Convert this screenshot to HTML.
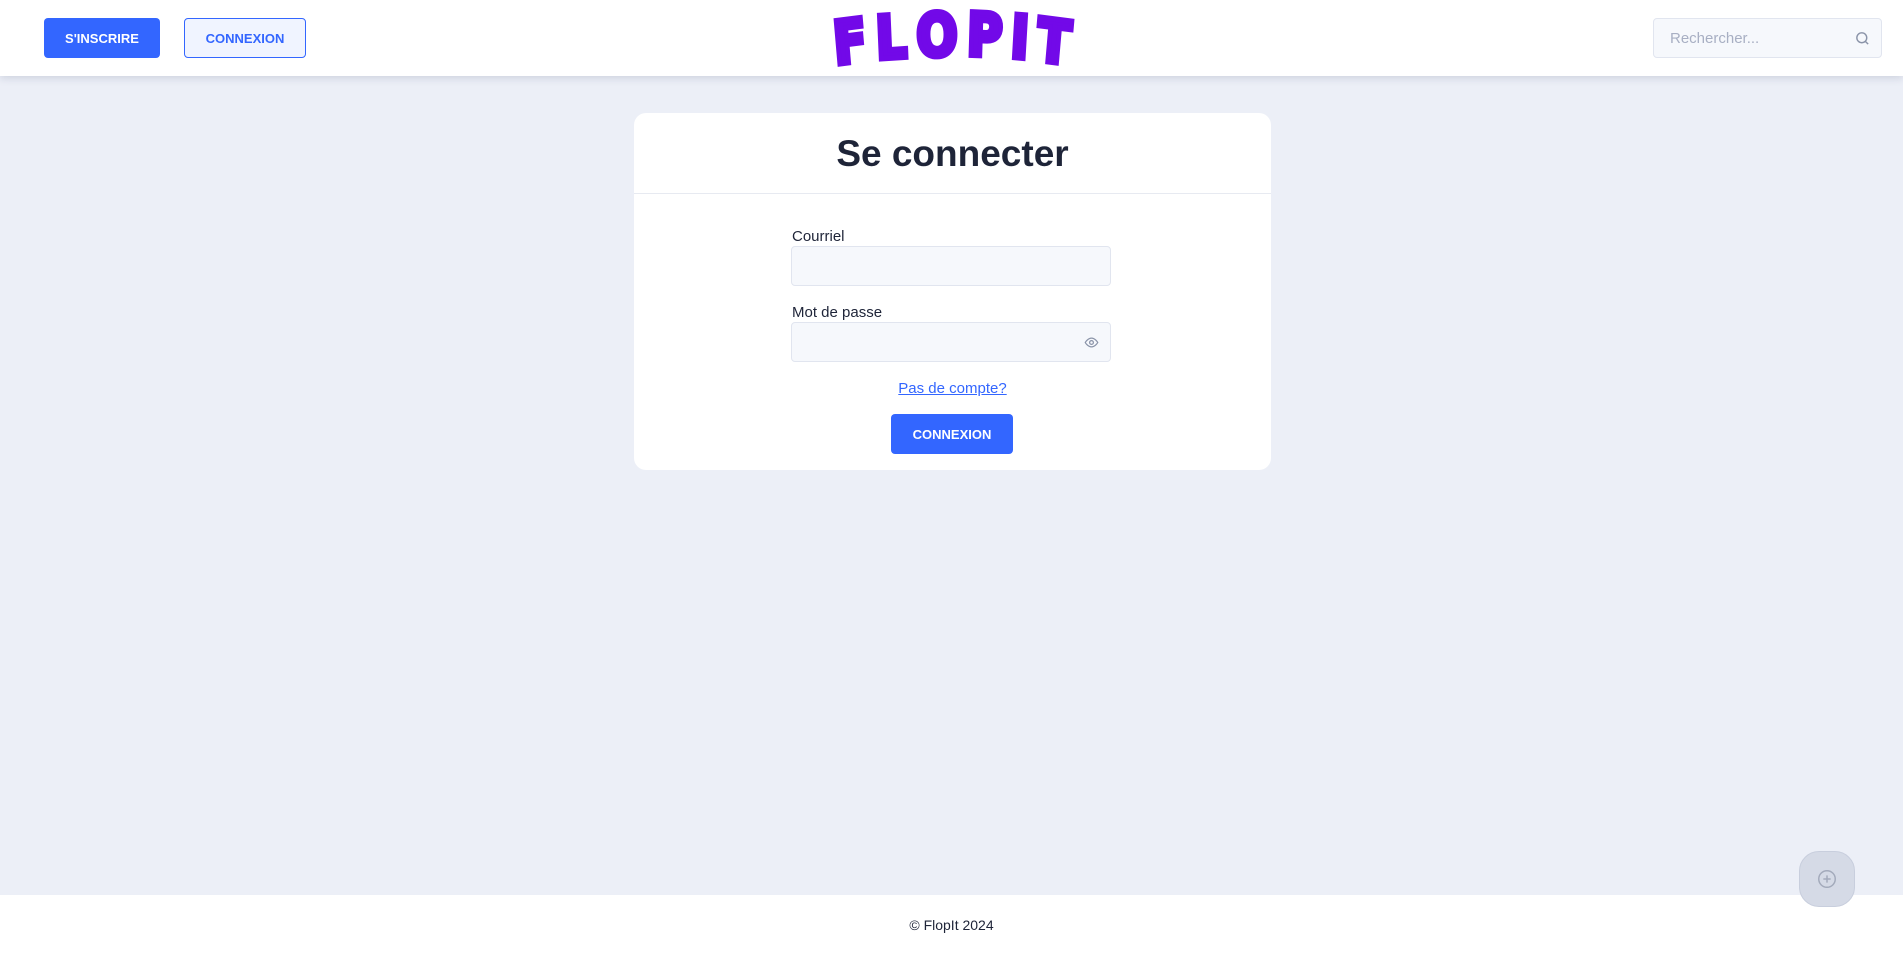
<!DOCTYPE html>
<html><head><meta charset="utf-8"><style>
*{box-sizing:border-box;margin:0;padding:0}
body{width:1903px;height:955px;background:#eceff7;font-family:"Liberation Sans",sans-serif;position:relative;overflow:hidden;color:#1e2438}
.hdr{position:absolute;left:0;top:0;width:1903px;height:76px;background:#fff;box-shadow:0 2px 8px rgba(30,40,80,.15)}
.btn{position:absolute;height:40px;border-radius:4px;font-weight:bold;font-size:13px;display:flex;align-items:center;justify-content:center}
.fill{background:#3366ff;color:#fff}
.out{border:1px solid #3366ff;color:#3366ff;background:#f0f4ff}
.logo{position:absolute;left:831px;top:4px;width:242px;height:64px;font-family:"DejaVu Sans",sans-serif;font-weight:900;font-size:54px;color:#7209e8;-webkit-text-stroke:5px #7209e8;display:flex;justify-content:space-between}
.logo span{display:inline-block}
.search{position:absolute;left:1653px;top:18px;width:229px;height:40px;border:1px solid #e1e5ef;background:#f6f8fc;border-radius:4px;color:#a8afc3;font-size:15px;padding:11px 16px}
.card{position:absolute;left:634px;top:113px;width:637px;height:357px;background:#fff;border-radius:12px}
h1{position:absolute;top:20px;width:100%;text-align:center;font-size:37px;font-weight:bold;color:#1e2438}
.div{position:absolute;top:80px;left:0;width:100%;border-top:1px solid #e7eaf1}
.lbl{position:absolute;left:158px;font-size:15px;color:#1e2438}
.inp{position:absolute;left:157px;width:320px;height:40px;background:#f6f8fc;border:1px solid #e1e5ef;border-radius:4px}
.link{position:absolute;top:267px;width:100%;text-align:center;color:#3366ff;text-decoration:underline;font-size:15px}
.foot{position:absolute;left:0;top:895px;width:1903px;height:60px;background:#fff;text-align:center;font-size:14px;padding-top:22px}
.fab{position:absolute;left:1799px;top:851px;width:56px;height:56px;border-radius:20px;background:#d5dae6;border:1px solid #c8cedd;display:flex;align-items:center;justify-content:center}
</style></head><body>
<div class="hdr">
<div class="btn fill" style="left:44px;top:18px;width:116px">S'INSCRIRE</div>
<div class="btn out" style="left:184px;top:18px;width:122px">CONNEXION</div>
<div class="logo"><span style="transform:scale(.9,1.1) rotate(-6deg) translateY(6px)">F</span><span style="transform:scale(.9,1.1) rotate(-3deg) translateY(2px)">L</span><span style="transform:scale(.9,1.1) rotate(-1deg)">O</span><span style="transform:scale(.9,1.1) rotate(2deg)">P</span><span style="transform:scale(.9,1.1) rotate(4deg) translateY(2px)">I</span><span style="transform:scale(.9,1.1) rotate(6deg) translateY(6px)">T</span></div>
<div class="search">Rechercher...
<svg style="position:absolute;right:10px;top:11px" width="17" height="17" viewBox="0 0 24 24" fill="none" stroke="#8a93a8" stroke-width="2"><circle cx="11" cy="11" r="7"/><path d="M20 20l-4-4"/></svg></div>
</div>
<div class="card">
<h1>Se connecter</h1>
<div class="div"></div>
<div class="lbl" style="top:115px">Courriel</div>
<div class="inp" style="top:133px"></div>
<div class="lbl" style="top:191px">Mot de passe</div>
<div class="inp" style="top:209px"><svg style="position:absolute;right:10px;top:12px" width="17" height="15" viewBox="0 0 24 24" fill="none" stroke="#8a93a8" stroke-width="2"><path d="M2 12s4-7 10-7 10 7 10 7-4 7-10 7S2 12 2 12z"/><circle cx="12" cy="12" r="3"/></svg></div>
<div class="link">Pas de compte?</div>
<div class="btn fill" style="left:257px;top:301px;width:122px">CONNEXION</div>
</div>
<div class="foot">© FlopIt 2024</div>
<div class="fab"><svg width="22" height="22" viewBox="0 0 24 24" fill="none" stroke="#a3aabb" stroke-width="1.6"><circle cx="12" cy="12" r="9"/><path d="M12 8v8M8 12h8"/></svg></div>
</body></html>
